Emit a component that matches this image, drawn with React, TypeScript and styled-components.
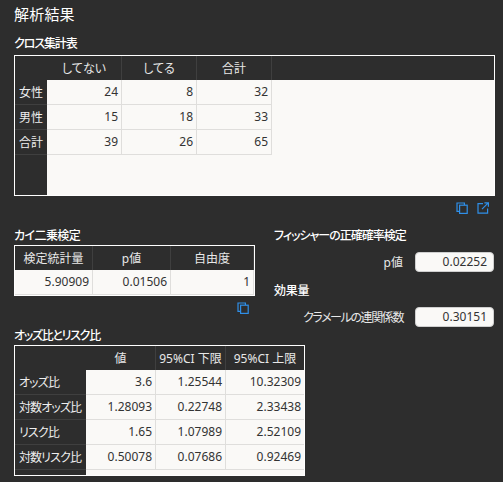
import React from "react";
import styled, { createGlobalStyle } from "styled-components";

const GlobalStyle = createGlobalStyle`
    html, body {
        margin: 0;
        padding: 0;
        background: #2d2d2d;
    }
    body {
        font-family: "Noto Sans", "Noto Sans CJK JP", sans-serif;
        font-size: 12px;
        font-feature-settings: "palt";
        color: #f2f2f2;
    }
`;

const Page = styled.div`
    width: 503px;
    height: 482px;
    box-sizing: border-box;
    padding: 3px 8px 0 14px;
    overflow: hidden;
`;

const Title = styled.h1`
    margin: 0 0 9px;
    height: 23px;
    line-height: 23px;
    font-size: 15px;
    font-weight: 400;
    letter-spacing: 0.2px;
    color: #ffffff;
`;

const SectionTitle = styled.h2<{ $gap?: number; $track?: number }>`
    margin: ${(p) => p.$gap ?? 0}px 0 0;
    height: 18px;
    line-height: 18px;
    font-size: 12px;
    font-weight: 500;
    letter-spacing: ${(p) => p.$track ?? -0.3}px;
    white-space: nowrap;
    color: #ffffff;
`;

const TopTitle = styled(SectionTitle)`
    margin-bottom: 2px;
`;

const Frame = styled.div<{ $width: number; $height: number }>`
    width: ${(p) => p.$width}px;
    height: ${(p) => p.$height}px;
    box-sizing: border-box;
    border: 1px solid #ffffff;
    background: #faf9f7;
    display: flex;
    overflow: hidden;
`;

const RowHeaders = styled.div<{ $width: number }>`
    width: ${(p) => p.$width}px;
    flex: none;
    background: #2d2d2d;
`;

const Corner = styled.div`
    height: 24px;
`;

const RowHeader = styled.div<{ $long: boolean }>`
    height: 25px;
    box-sizing: border-box;
    padding-left: 4px;
    line-height: 26px;
    border-bottom: 1px solid #3f3f3f;
    white-space: nowrap;
    letter-spacing: ${(p) => (p.$long ? -0.9 : 0)}px;
    color: #eeeeee;
`;

const Columns = styled.div`
    flex: 1;
    display: flex;
    flex-direction: column;
`;

const HeaderBand = styled.div`
    display: flex;
    height: 24px;
    background: #2d2d2d;
`;

const HeaderCell = styled.div<{ $width: number }>`
    width: ${(p) => p.$width}px;
    box-sizing: border-box;
    text-align: center;
    line-height: 25px;
    border-right: 1px solid #3f3f3f;
    white-space: nowrap;
    color: #e8e8e8;
`;

const BodyRow = styled.div`
    display: flex;
    height: 25px;
`;

const Cell = styled.div<{ $width: number }>`
    width: ${(p) => p.$width}px;
    box-sizing: border-box;
    padding-right: 3px;
    text-align: right;
    line-height: 24px;
    border-right: 1px solid #dfdedc;
    border-bottom: 1px solid #dfdedc;
    color: #333333;
`;

const IconRow = styled.div<{ $width: number; $height: number }>`
    width: ${(p) => p.$width}px;
    height: ${(p) => p.$height}px;
    display: flex;
    justify-content: flex-end;
    align-items: center;
    gap: 9px;
    padding-right: 6px;
    box-sizing: border-box;
`;

const IconSvg = styled.svg`
    display: block;
    width: 12px;
    height: 12px;
    fill: none;
    stroke: #2f8fe8;
    stroke-width: 1.2;
`;

const TwoColumns = styled.div`
    display: flex;
    gap: 19px;
    height: 100px;
    margin-top: 7px;
`;

const Side = styled.div`
    flex: 1;
`;

const FieldRow = styled.div`
    display: flex;
    justify-content: flex-end;
    align-items: center;
    gap: 12px;
    height: 20px;
    margin-top: 7px;
`;

const FieldLabel = styled.span<{ $track?: number }>`
    color: #e8e8e8;
    white-space: nowrap;
    letter-spacing: ${(p) => p.$track ?? 0}px;
`;

const FieldValue = styled.div`
    width: 79px;
    height: 20px;
    box-sizing: border-box;
    margin-right: 1px;
    padding-right: 6px;
    background: #faf9f7;
    border: 1px solid #cfcfcf;
    border-radius: 4px;
    text-align: right;
    line-height: 18px;
    color: #333333;
`;

const CopyIcon = () => (
    <IconSvg viewBox="0 0 12 12">
        <path d="M3 9.4H1V1h7.4v2" />
        <rect x="3.6" y="3.2" width="7.6" height="8.2" />
    </IconSvg>
);

const OpenIcon = () => (
    <IconSvg viewBox="0 0 12 12">
        <path d="M6 1.6H1v9.6h9.6V6.4" />
        <path d="M5 7.2 11 1.2M7.4 .8h4v4" />
    </IconSvg>
);

interface GridProps {
    width: number;
    height: number;
    headerWidth: number;
    columns: { label: string; width: number }[];
    rows: { label: string; values: (string | number)[] }[];
}

const ResultGrid: React.FC<GridProps> = ({ width, height, headerWidth, columns, rows }) => (
    <Frame $width={width} $height={height}>
        {headerWidth > 0 && (
            <RowHeaders $width={headerWidth}>
                <Corner />
                {rows.map((r) => (
                    <RowHeader key={r.label} $long={r.label.length > 2}>
                        {r.label}
                    </RowHeader>
                ))}
            </RowHeaders>
        )}
        <Columns>
            <HeaderBand>
                {columns.map((c) => (
                    <HeaderCell key={c.label} $width={c.width}>
                        {c.label}
                    </HeaderCell>
                ))}
            </HeaderBand>
            {rows.map((r) => (
                <BodyRow key={r.label}>
                    {r.values.map((v, i) => (
                        <Cell key={i} $width={columns[i].width}>
                            {v}
                        </Cell>
                    ))}
                </BodyRow>
            ))}
        </Columns>
    </Frame>
);

const App: React.FC = () => (
    <Page>
        <GlobalStyle />
        <Title>解析結果</Title>
        <TopTitle $track={-1.1}>クロス集計表</TopTitle>
        <ResultGrid
            width={481}
            height={141}
            headerWidth={32}
            columns={[
                { label: "してない", width: 75 },
                { label: "してる", width: 75 },
                { label: "合計", width: 75 },
            ]}
            rows={[
                { label: "女性", values: [24, 8, 32] },
                { label: "男性", values: [15, 18, 33] },
                { label: "合計", values: [39, 26, 65] },
            ]}
        />
        <IconRow $width={481} $height={24}>
            <CopyIcon />
            <OpenIcon />
        </IconRow>
        <TwoColumns>
            <div>
                <SectionTitle $track={-0.6}>カイ二乗検定</SectionTitle>
                <ResultGrid
                    width={241}
                    height={51}
                    headerWidth={0}
                    columns={[
                        { label: "検定統計量", width: 78 },
                        { label: "p値", width: 78 },
                        { label: "自由度", width: 83 },
                    ]}
                    rows={[{ label: "r", values: ["5.90909", "0.01506", 1] }]}
                />
                <IconRow $width={241} $height={24}>
                    <CopyIcon />
                </IconRow>
            </div>
            <Side>
                <SectionTitle $track={-1}>フィッシャーの正確確率検定</SectionTitle>
                <FieldRow>
                    <FieldLabel>p値</FieldLabel>
                    <FieldValue>0.02252</FieldValue>
                </FieldRow>
                <SectionTitle $gap={10}>効果量</SectionTitle>
                <FieldRow>
                    <FieldLabel $track={-1.4}>クラメールの連関係数</FieldLabel>
                    <FieldValue>0.30151</FieldValue>
                </FieldRow>
            </Side>
        </TwoColumns>
        <SectionTitle $track={-1.3}>オッズ比とリスク比</SectionTitle>
        <ResultGrid
            width={291}
            height={131}
            headerWidth={71}
            columns={[
                { label: "値", width: 70 },
                { label: "95%CI 下限", width: 70 },
                { label: "95%CI 上限", width: 79 },
            ]}
            rows={[
                { label: "オッズ比", values: ["3.6", "1.25544", "10.32309"] },
                { label: "対数オッズ比", values: ["1.28093", "0.22748", "2.33438"] },
                { label: "リスク比", values: ["1.65", "1.07989", "2.52109"] },
                { label: "対数リスク比", values: ["0.50078", "0.07686", "0.92469"] },
            ]}
        />
    </Page>
);

export default App;
